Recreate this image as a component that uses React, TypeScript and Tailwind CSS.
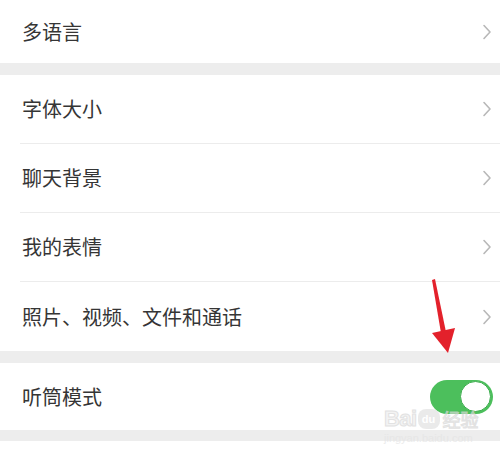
import React from 'react';

const font = { fontFamily: '"Noto Sans CJK SC", "Noto Sans", sans-serif' };

function Chevron() {
  return (
    <svg width="10" height="16" viewBox="0 0 10 16" className="shrink-0">
      <path d="M2 1.5 L8 8 L2 14.5" fill="none" stroke="#b8b8b8" strokeWidth="1.6" strokeLinecap="round" strokeLinejoin="round" />
    </svg>
  );
}

function Row({ label, h, right }: { label: string; h: string; right?: React.ReactNode }) {
  return (
    <div className={`flex items-center justify-between pl-[22px] pr-[8px] bg-white ${h}`}>
      <span className="text-[20px] leading-none text-[#353535]">{label}</span>
      {right ?? <Chevron />}
    </div>
  );
}

function Divider() {
  return <div className="h-px ml-[20px] bg-[#ececec]" />;
}

function Band({ h }: { h: string }) {
  return <div className={`bg-[#ededed] ${h}`} />;
}

function Toggle() {
  return (
    <div className="w-[63px] h-[34px] rounded-full bg-[#4cbf5c] flex items-center justify-end pr-[2px] mr-[-1px]">
      <div className="w-[31px] h-[31px] rounded-full bg-white border border-[#3fae50]" />
    </div>
  );
}

export default function App() {
  return (
    <div className="relative w-[500px] h-[461px] bg-white overflow-hidden" style={font}>
      <div className="flex flex-col">
        <Row label="多语言" h="h-[63px]" />
        <Band h="h-[12px]" />
        <Row label="字体大小" h="h-[68px]" />
        <Divider />
        <Row label="聊天背景" h="h-[68px]" />
        <Divider />
        <Row label="我的表情" h="h-[68px]" />
        <Divider />
        <Row label="照片、视频、文件和通话" h="h-[69px]" />
        <Band h="h-[12px]" />
        <Row label="听筒模式" h="h-[67px]" right={<Toggle />} />
        <Band h="h-[11px]" />
        <div className="h-[20px] bg-white" />
      </div>

      {/* red annotation arrow */}
      <svg className="absolute left-0 top-0 pointer-events-none" width="500" height="461">
        <polygon points="432,280 435,279 446,332 441,333" fill="#e3212b" />
        <polygon points="432,333 455,328 448,353" fill="#e3212b" />
      </svg>

      {/* watermark */}
      <div className="absolute left-[384px] top-[408px] flex flex-col items-start pointer-events-none opacity-70">
        <div className="flex items-center leading-none">
          <span className="text-[22px] font-bold text-[#eeeeee] tracking-tight" style={{ fontFamily: '"Liberation Sans", sans-serif', WebkitTextStroke: '1px #d6d6d6' }}>Bai</span>
          <span className="ml-[1px] w-[22px] h-[20px] rounded-[8px] bg-[#e2e2e2] text-[11px] font-bold text-white flex items-center justify-center" style={{ fontFamily: '"Liberation Sans", sans-serif' }}>du</span>
          <span className="ml-[3px] text-[18px] text-[#eeeeee]" style={{ WebkitTextStroke: '1px #d6d6d6' }}>经验</span>
        </div>
        <span className="text-[11px] leading-none mt-[3px] text-[#e4e4e4]" style={{ fontFamily: '"Liberation Sans", sans-serif' }}>jingyan.baidu.com</span>
      </div>
    </div>
  );
}
